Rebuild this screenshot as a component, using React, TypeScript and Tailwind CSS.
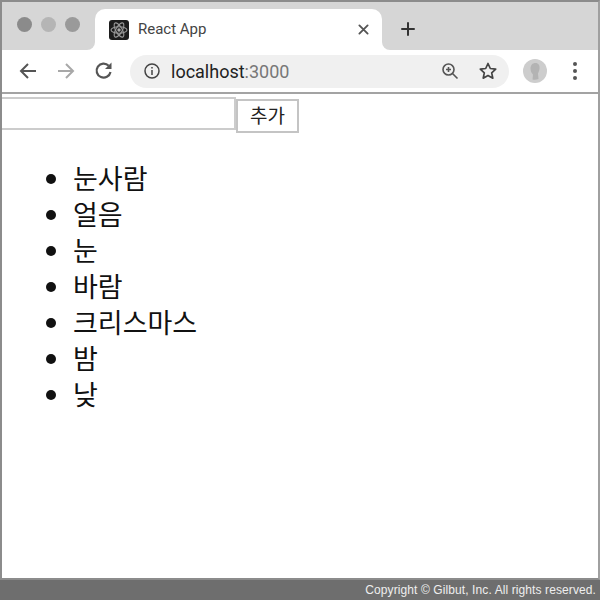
import React from 'react';

const words = ['눈사람', '얼음', '눈', '바람', '크리스마스', '밤', '낮'];

const kr = { fontFamily: '"Noto Sans CJK KR", sans-serif' };

export default function App() {
  return (
    <div className="w-[600px] h-[600px] flex flex-col bg-white overflow-hidden font-['Liberation_Sans',sans-serif]">
      <div className="flex-1 min-h-0 flex flex-col border-x-2 border-t-2 border-b-2 border-[#8c8c8c] border-r-[#a0a0a0]">
        {/* Tab strip */}
        <div className="h-[48px] flex bg-white shrink-0">
          <div className="w-[93px] bg-[#d6d6d6] rounded-br-[8px] flex items-start gap-[9px] pl-[15px] pt-[15px]">
            <span className="w-[15px] h-[15px] rounded-full bg-[#8b8b8b]" />
            <span className="w-[15px] h-[15px] rounded-full bg-[#b5b5b5]" />
            <span className="w-[15px] h-[15px] rounded-full bg-[#9a9a9a]" />
          </div>
          <div className="w-[287px] flex flex-col bg-[#d6d6d6]">
            <div className="mt-[7px] flex-1 bg-white rounded-t-[10px] flex items-center pl-[14px] pr-[13px]">
              <svg width="20" height="20" viewBox="0 0 20 20" className="shrink-0">
                <rect width="20" height="20" rx="3" fill="#1c1c1c" />
                <g fill="none" stroke="#9a9a9a" strokeWidth="1.1">
                  <ellipse cx="10" cy="10" rx="8" ry="3.2" />
                  <ellipse cx="10" cy="10" rx="8" ry="3.2" transform="rotate(60 10 10)" />
                  <ellipse cx="10" cy="10" rx="8" ry="3.2" transform="rotate(120 10 10)" />
                </g>
                <circle cx="10" cy="10" r="1.7" fill="#a8a8a8" />
              </svg>
              <span className="ml-[9px] text-[15px] text-[#444444] font-['Roboto',sans-serif]">React App</span>
              <svg width="11" height="11" viewBox="0 0 12 12" className="ml-auto" stroke="#555555" strokeWidth="2" strokeLinecap="round">
                <path d="M1.5 1.5l9 9M10.5 1.5l-9 9" />
              </svg>
            </div>
          </div>
          <div className="flex-1 bg-[#d6d6d6] rounded-bl-[8px] flex items-start pl-[19px] pt-[20px]">
            <svg width="14" height="14" viewBox="0 0 14 14" stroke="#333333" strokeWidth="2" strokeLinecap="round">
              <path d="M7 1v12M1 7h12" />
            </svg>
          </div>
        </div>

        {/* Toolbar */}
        <div className="h-[44px] shrink-0 flex items-center border-b-2 border-[#a3a3a3] bg-white">
          <svg width="20" height="20" viewBox="0 0 20 20" fill="none" stroke="#555555" strokeWidth="2" className="ml-[16px]">
            <path d="M18 10H3M10 3l-7 7 7 7" />
          </svg>
          <svg width="20" height="20" viewBox="0 0 20 20" fill="none" stroke="#a8a8a8" strokeWidth="2" className="ml-[18px]">
            <path d="M2 10h15M10 3l7 7-7 7" />
          </svg>
          <svg width="20" height="20" viewBox="0 0 20 20" fill="none" stroke="#555555" strokeWidth="2.2" className="ml-[18px]">
            <path d="M16.5 11a7 7 0 1 1-1.8-6.2" />
            <path d="M17.5 1.5v6.5h-6.5" fill="#555555" stroke="none" />
          </svg>
          <div className="ml-[16px] w-[379px] h-[33px] rounded-full bg-[#f0f0f0] flex items-center pl-[13px] pr-[11px]">
            <svg width="18" height="18" viewBox="0 0 18 18" fill="none" stroke="#444444" strokeWidth="1.5">
              <circle cx="9" cy="9" r="7" />
              <path d="M9 8v5M9 5v1.6" />
            </svg>
            <span className="ml-[10px] text-[18px] text-[#222222] font-['Roboto',sans-serif]">
              localhost<span className="text-[#777777]">:3000</span>
            </span>
            <svg width="18" height="18" viewBox="0 0 18 18" fill="none" stroke="#555555" strokeWidth="1.6" className="ml-auto">
              <circle cx="7.5" cy="7.5" r="5.5" />
              <path d="M11.5 11.5l5 5M7.5 5v5M5 7.5h5" />
            </svg>
            <svg width="20" height="20" viewBox="0 0 20 20" fill="none" stroke="#444444" strokeWidth="1.7" className="ml-[19px]">
              <path d="M10 2.5l2.3 5 5.4.6-4 3.7 1.1 5.4-4.8-2.7-4.8 2.7 1.1-5.4-4-3.7 5.4-.6z" strokeLinejoin="round" />
            </svg>
          </div>
          <svg width="24" height="24" viewBox="0 0 24 24" className="ml-[14px]">
            <circle cx="12" cy="12" r="12" fill="#cdcdcd" />
            <path d="M7.5 10c0-4 2-6 5-6s4.500 2.500 4 6c-.3 2-1 3-1.500 4.500l.5 5.500a12 12 0 0 1-6 .5l.5-5c-1.500-1.500-2.500-3.500-2.500-6z" fill="#b3b3b3" />
          </svg>
          <div className="ml-[26px] flex flex-col gap-[3px]">
            <span className="w-[4px] h-[4px] rounded-full bg-[#555555]" />
            <span className="w-[4px] h-[4px] rounded-full bg-[#555555]" />
            <span className="w-[4px] h-[4px] rounded-full bg-[#555555]" />
          </div>
        </div>

        {/* Page */}
        <div className="flex-1 min-h-0 bg-white">
          <div className="flex items-start pt-[3px]">
            <input className="w-[234px] h-[33px] border-2 border-[#cccccc] border-l-0 bg-white outline-none" />
            <button style={kr} className="mt-[2px] w-[63px] h-[34px] border-2 border-[#c4c4c4] bg-white text-[19px] text-[#222222] leading-none flex items-center justify-center pb-[3px]">
              추가
            </button>
          </div>
          <ul style={kr} className="list-disc pl-[71px] mt-[27px] text-[27px] leading-[36px] text-[#111111]">
            {words.map((w) => (
              <li key={w} className="h-[36px]">{w}</li>
            ))}
          </ul>
        </div>
      </div>

      {/* Footer */}
      <div className="h-[20px] shrink-0 bg-[#6e6e6e] flex items-center justify-end pr-[4px] text-[12px] tracking-[0.1px] text-[#eeeeee]">
        Copyright © Gilbut, Inc. All rights reserved.
      </div>
    </div>
  );
}
